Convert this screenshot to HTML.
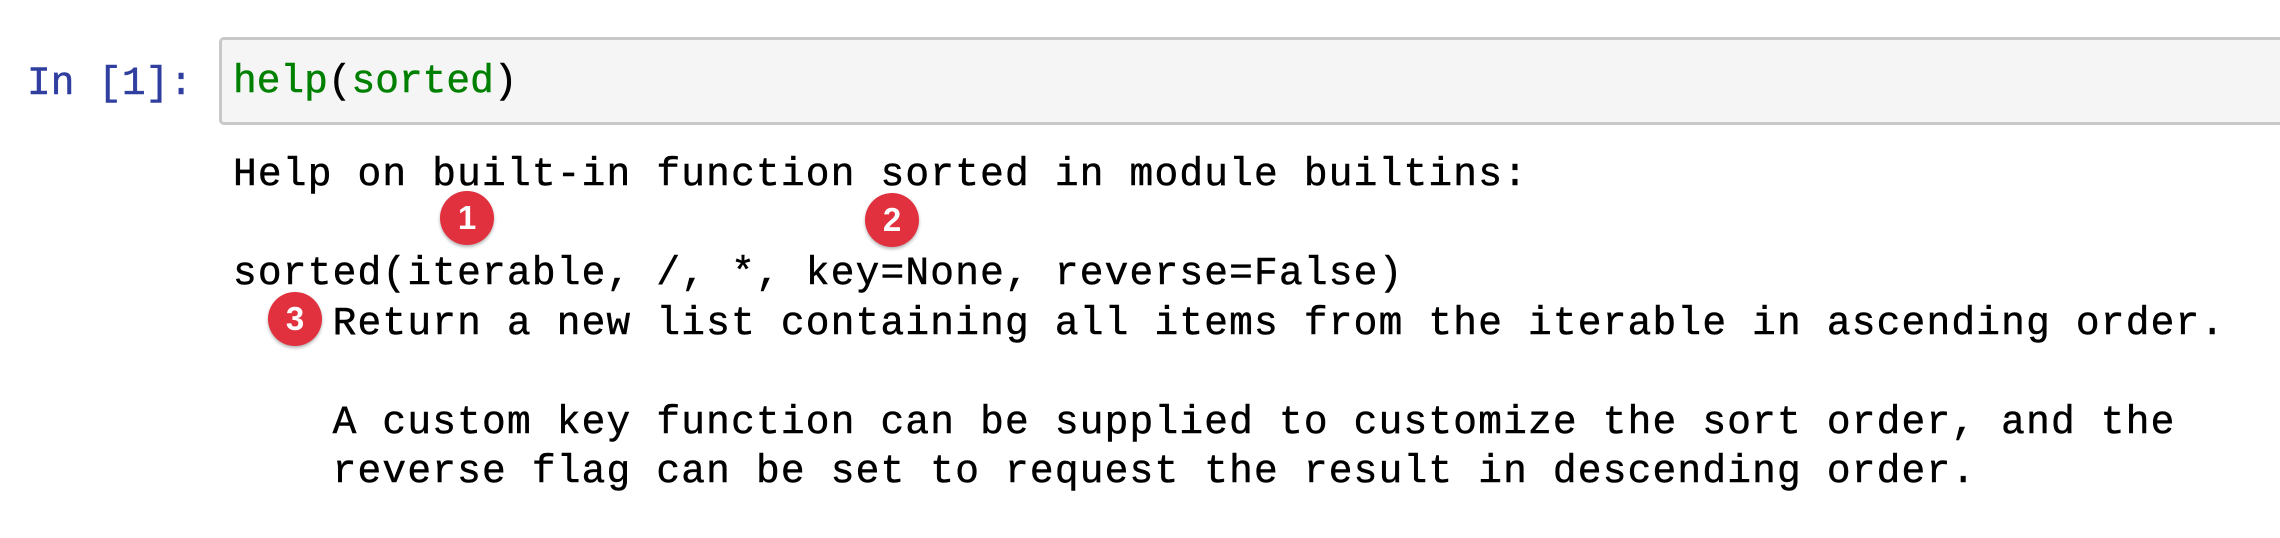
<!DOCTYPE html>
<html><head><meta charset="utf-8"><style>
html,body{margin:0;padding:0;background:#fff;width:2280px;height:538px;overflow:hidden;position:relative}
.mono{font-family:"Liberation Mono",monospace;font-size:39.5px;letter-spacing:1.2px;white-space:pre;position:absolute;line-height:1;-webkit-text-stroke:0.5px currentColor}
.box{position:absolute;left:219px;top:37px;width:2080px;height:88px;box-sizing:border-box;background:#f5f5f5;border:3px solid #c8c8c8;border-radius:5px}
.b{position:absolute;width:54px;height:54px;border-radius:50%;background:#e2313e;color:#fff;font-family:"Liberation Sans",sans-serif;font-weight:bold;font-size:33px;text-align:center;line-height:54px;box-shadow:0 2px 3px rgba(0,0,0,.3)}
</style></head><body>
<div class="box"></div>
<div class="mono" style="left:27px;top:64px;color:#303f9f;letter-spacing:0">In [1]:</div>
<div class="mono" style="left:233px;top:62px;letter-spacing:0"><span style="color:#008000">help</span>(<span style="color:#008000">sorted</span>)</div>
<div class="mono" style="left:233px;top:150px;line-height:49.5px">Help on built-in function sorted in module builtins:

sorted(iterable, /, *, key=None, reverse=False)
    Return a new list containing all items from the iterable in ascending order.

    A custom key function can be supplied to customize the sort order, and the
    reverse flag can be set to request the result in descending order.</div>
<div class="b" style="left:440px;top:191px">1</div>
<div class="b" style="left:865px;top:193px">2</div>
<div class="b" style="left:268px;top:292px">3</div>
</body></html>
